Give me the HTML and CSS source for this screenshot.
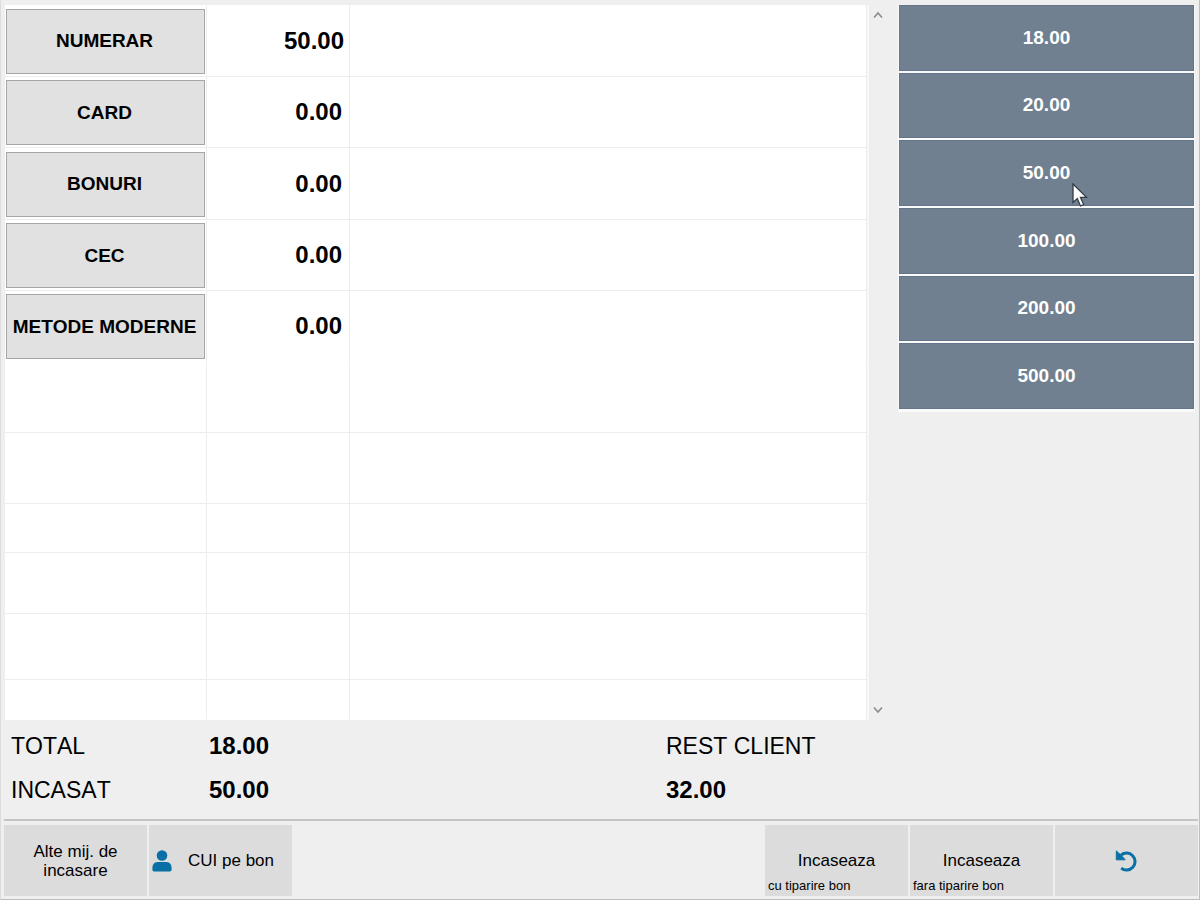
FILE: index.html
```html
<!DOCTYPE html>
<html lang="ro">
<head>
<meta charset="utf-8">
<title>Incasare</title>
<link rel="stylesheet" href="styles.css">
</head>
<body>
<main class="window">
  <section class="workspace">
    <div class="payments">
      <table class="grid">
        <colgroup><col class="col-method"><col class="col-amount"><col></colgroup>
        <tbody>
          <tr class="row-first"><td><button class="method" type="button">NUMERAR</button></td><td class="amount selected">50.00</td><td></td></tr>
          <tr class="row"><td><button class="method" type="button">CARD</button></td><td class="amount">0.00</td><td></td></tr>
          <tr class="row-first"><td><button class="method" type="button">BONURI</button></td><td class="amount">0.00</td><td></td></tr>
          <tr class="row"><td><button class="method" type="button">CEC</button></td><td class="amount">0.00</td><td></td></tr>
          <tr class="row open"><td><button class="method" type="button">METODE MODERNE</button></td><td class="amount">0.00</td><td></td></tr>
          <tr class="row"><td></td><td></td><td></td></tr>
          <tr class="row"><td></td><td></td><td></td></tr>
          <tr class="row-short"><td></td><td></td><td></td></tr>
          <tr class="row-medium"><td></td><td></td><td></td></tr>
          <tr class="row-tall"><td></td><td></td><td></td></tr>
          <tr class="row-last"><td></td><td></td><td></td></tr>
        </tbody>
      </table>
      <div class="scroller">
        <button class="scroll-button" type="button" aria-label="Sus"><svg width="10" height="8" viewBox="0 0 10 8"><path d="M1 6.500 5 2l4 4.500" fill="none" stroke="#8c8c8c" stroke-width="1.600"/></svg></button>
        <button class="scroll-button" type="button" aria-label="Jos"><svg width="10" height="8" viewBox="0 0 10 8"><path d="M1 1.500 5 6l4-4.500" fill="none" stroke="#8c8c8c" stroke-width="1.600"/></svg></button>
      </div>
    </div>
    <aside class="side">
      <div class="quick">
        <button class="value" type="button">18.00</button>
        <button class="value" type="button">20.00</button>
        <button class="value" type="button">50.00
          <svg class="pointer" width="16" height="25" viewBox="0 0 16 25"><path d="M1 1v18.500l4.300-4 3.200 7.500 3.200-1.400-3.200-7.200h6z" fill="#fff" stroke="#333b45" stroke-width="1.300"/></svg>
        </button>
        <button class="value" type="button">100.00</button>
        <button class="value" type="button">200.00</button>
        <button class="value" type="button">500.00</button>
      </div>
    </aside>
  </section>
  <section class="totals">
    <span>TOTAL</span><strong>18.00</strong><span>REST CLIENT</span>
    <span>INCASAT</span><strong>50.00</strong><strong>32.00</strong>
  </section>
  <footer class="actions">
    <button class="action" type="button">Alte mij. de<br>incasare</button>
    <button class="action with-icon" type="button">
      <svg width="20" height="22" viewBox="0 0 20 22"><g fill="#0870a4"><circle cx="10" cy="5.500" r="5.300"/><path d="M5.500 12h9Q19.600 12.500 19.600 18v1.800q0 1.700-1.700 1.700H2.100Q.4 21.500.4 19.800V18Q.4 12.500 5.500 12z"/></g></svg>
      <span>CUI pe bon</span>
    </button>
    <button class="action stacked push" type="button"><span class="main-label">Incaseaza</span><span class="note">cu tiparire bon</span></button>
    <button class="action stacked" type="button"><span class="main-label">Incaseaza</span><span class="note">fara tiparire bon</span></button>
    <button class="action" type="button" aria-label="Inapoi">
      <svg width="24" height="22" viewBox="0 0 24 22"><path d="M6 5.200A8.500 8.500 0 1 1 6.200 18.200" fill="none" stroke="#0870a4" stroke-width="3"/><path d="M1.300.9v8.900h8.900L7.300 6.500 5 4.300z" fill="#0870a4" stroke="#0870a4" stroke-linejoin="round"/></svg>
    </button>
  </footer>
</main>
</body>
</html>
```
FILE: styles.css
```css
* {
  box-sizing: border-box;
}

body {
  margin: 0;
  background: #efefef;
  color: #000;
  font-family: "Liberation Sans", Arial, sans-serif;
  font-kerning: none;
}

button {
  margin: 0;
  padding: 0;
  border: 0;
  background: none;
  color: inherit;
  font: inherit;
  font-kerning: none;
}

svg {
  display: block;
}

.window {
  display: flex;
  flex-direction: column;
  min-height: 100vh;
  padding: 5px 1px 3px 3px;
  border: solid #bdbdbd;
  border-width: 0 1px 1px;
  border-left-color: #dcdcdc;
}

.workspace {
  display: flex;
  flex: 1;
  gap: 11px;
}

.payments {
  display: flex;
  flex: 1;
  padding-left: 1px;
}

.grid {
  flex: 1;
  border-collapse: separate;
  border-spacing: 0;
  table-layout: fixed;
  background: #fff;
  border-right: 2px solid #f8f8f8;
}

.col-method {
  width: 202px;
}

.col-amount {
  width: 143px;
}

.grid td {
  padding: 0;
  border-right: 1px solid #ededed;
  border-bottom: 1px solid #ededed;
}

.row {
  height: 71px;
}

.row-first {
  height: 72px;
}

.row-short {
  height: 49px;
}

.row-medium {
  height: 61px;
}

.row-tall {
  height: 66px;
}

.row-last {
  height: 40px;
}

.grid .open td,
.grid .row-last td {
  border-bottom-color: #fff;
}

.method {
  display: block;
  width: 199px;
  height: 65px;
  margin: 3px 0 2px 1px;
  padding-right: 2px;
  border: 1px solid #a6a6a6;
  background: #e1e1e1;
  font-size: 19px;
  font-weight: bold;
}

.grid .amount {
  padding-right: 7px;
  font-size: 24px;
  font-weight: bold;
  text-align: right;
}

.grid .selected {
  padding-right: 5px;
}

.scroller {
  display: flex;
  flex-direction: column;
  justify-content: space-between;
  width: 18px;
}

.scroll-button {
  display: grid;
  place-items: center;
  height: 20px;
}

.side {
  width: 300px;
  padding-right: 3px;
}

.quick {
  display: grid;
  grid-template-rows: repeat(6, 1fr);
  gap: 2px;
  height: 407px;
  padding: 0 1px 3px;
  background: #fafafa;
}

.value {
  position: relative;
  border: 1px solid #64758a;
  background: #708090;
  color: #fff;
  font-size: 19px;
  font-weight: bold;
}

.pointer {
  position: absolute;
  top: 42px;
  left: calc(50% + 25px);
}

.totals {
  display: grid;
  grid-template-columns: 198px 457px 1fr;
  grid-auto-rows: 44px;
  align-items: center;
  padding: 4px 7px 7px;
  font-size: 23px;
}

.totals strong {
  font-size: 24px;
}

.actions {
  display: flex;
  gap: 2px;
  padding-top: 4px;
  border-top: 2px solid #c4c4c4;
}

.action {
  display: flex;
  align-items: center;
  justify-content: center;
  width: 143px;
  height: 71px;
  background: #dcdcdc;
  font-size: 17px;
  line-height: 19px;
}

.with-icon {
  justify-content: flex-start;
  gap: 16px;
  padding-left: 3px;
}

.push {
  margin-left: auto;
}

.stacked {
  display: grid;
  grid-template-rows: 1fr auto 1fr;
  align-items: end;
  justify-content: stretch;
}

.main-label {
  grid-row: 2;
}

.note {
  grid-row: 3;
  padding: 0 3px 1px;
  font-size: 13px;
  text-align: left;
}
```
